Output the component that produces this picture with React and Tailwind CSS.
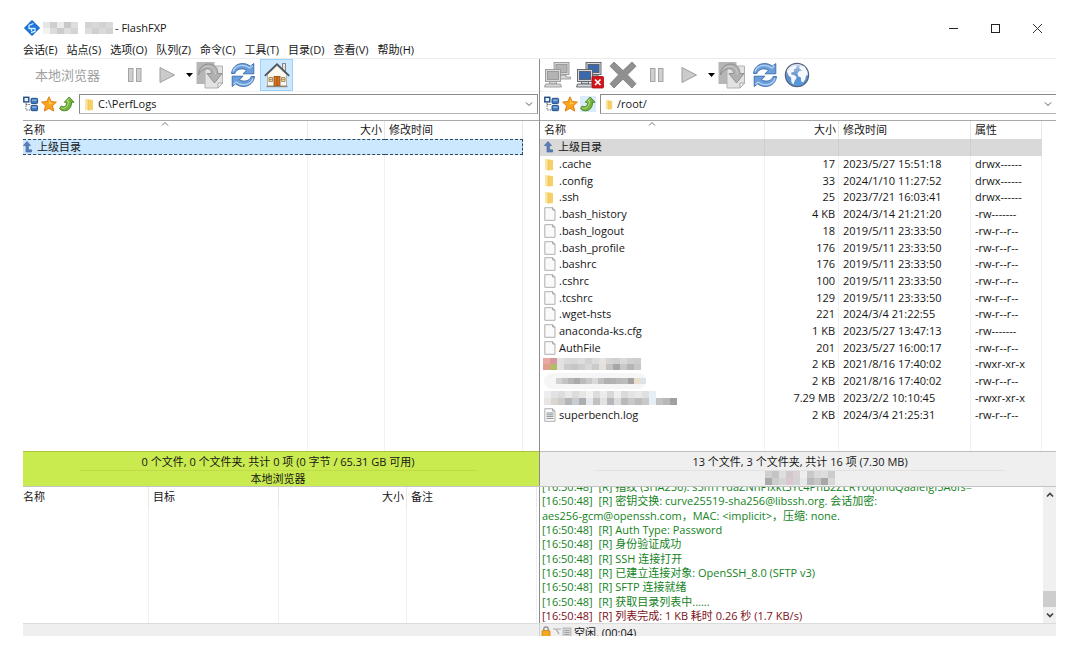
import React from "react";

const MENUS = ["会话(E)", "站点(S)", "选项(O)", "队列(Z)", "命令(C)", "工具(T)", "目录(D)", "查看(V)", "帮助(H)"];

const FILES = [
  { kind: "folder", name: ".cache", size: "17", time: "2023/5/27 15:51:18", attr: "drwx------" },
  { kind: "folder", name: ".config", size: "33", time: "2024/1/10 11:27:52", attr: "drwx------" },
  { kind: "folder", name: ".ssh", size: "25", time: "2023/7/21 16:03:41", attr: "drwx------" },
  { kind: "file", name: ".bash_history", size: "4 KB", time: "2024/3/14 21:21:20", attr: "-rw-------" },
  { kind: "file", name: ".bash_logout", size: "18", time: "2019/5/11 23:33:50", attr: "-rw-r--r--" },
  { kind: "file", name: ".bash_profile", size: "176", time: "2019/5/11 23:33:50", attr: "-rw-r--r--" },
  { kind: "file", name: ".bashrc", size: "176", time: "2019/5/11 23:33:50", attr: "-rw-r--r--" },
  { kind: "file", name: ".cshrc", size: "100", time: "2019/5/11 23:33:50", attr: "-rw-r--r--" },
  { kind: "file", name: ".tcshrc", size: "129", time: "2019/5/11 23:33:50", attr: "-rw-r--r--" },
  { kind: "file", name: ".wget-hsts", size: "221", time: "2024/3/4 21:22:55", attr: "-rw-r--r--" },
  { kind: "file", name: "anaconda-ks.cfg", size: "1 KB", time: "2023/5/27 13:47:13", attr: "-rw-------" },
  { kind: "file", name: "AuthFile", size: "201", time: "2023/5/27 16:00:17", attr: "-rw-r--r--" },
  { kind: "hiddenA", name: "", size: "2 KB", time: "2021/8/16 17:40:02", attr: "-rwxr-xr-x" },
  { kind: "hiddenB", name: "", size: "2 KB", time: "2021/8/16 17:40:02", attr: "-rw-r--r--" },
  { kind: "hiddenC", name: "", size: "7.29 MB", time: "2023/2/2 10:10:45", attr: "-rwxr-xr-x" },
  { kind: "log", name: "superbench.log", size: "2 KB", time: "2024/3/4 21:25:31", attr: "-rw-r--r--" },
];

const LOG = [
  "[16:50:48]  [R] 指纹 (SHA256): s5mTYdaZNhPIxkt3Yc4PnB2ZERYoqohdQaaIeIgI5A6fs=",
  "[16:50:48]  [R] 密钥交换: curve25519-sha256@libssh.org. 会话加密:",
  "aes256-gcm@openssh.com，MAC: <implicit>，压缩: none.",
  "[16:50:48]  [R] Auth Type: Password",
  "[16:50:48]  [R] 身份验证成功",
  "[16:50:48]  [R] SSH 连接打开",
  "[16:50:48]  [R] 已建立连接对象: OpenSSH_8.0 (SFTP v3)",
  "[16:50:48]  [R] SFTP 连接就绪",
  "[16:50:48]  [R] 获取目录列表中......",
];

/* ---------- pixelated privacy blocks ---------- */

function Mosaic({ rows, size, h = size, className = "" }) {
  const cols = Math.max(...rows.map((r) => r.length));
  return (
    <svg width={cols * size} height={rows.length * h} shapeRendering="crispEdges" className={"shrink-0 " + className} aria-hidden="true">
      {rows.map((r, y) =>
        r.map((c, x) => (c ? <rect key={x + "-" + y} x={x * size} y={y * h} width={size} height={h} fill={c} /> : null))
      )}
    </svg>
  );
}

const TITLE_MOSAIC = [
  ["#e6e6e6", "#cfcfcf", "#ececec", "#c9c9c9", "#dedede", null, "#d3d3d3", "#d8d8d8", "#d2d2d2", "#d9d9d9"],
  ["#f2f2f2", "#dcdcdc", "#cccccc", "#dedede", "#d4d4d4", null, "#dcdcdc", "#cfcfcf", "#dadada", "#d2d2d2"],
];
const STATUS_MOSAIC = [
  ["#cfcfcf", "#c4c4c4", "#dedede", "#d2c9cd", "#d9d2d5", "#eeeeee", "#c9c9c9", "#dadada", "#dddddd", "#cccccc"],
  ["#a9a9a9", "#cccccc", "#d5d5d5", "#d9c8d0", "#d2d2d2", "#e8e8e8", "#b9b9b9", "#c5c5c5", "#a8a8a8", "#d8d8d8"],
];
const ROW_A = [
  ["#e8a9a4", "#d8989a", "#e2e2e2", "#dadada", "#d8d8d8", "#dddddd", "#d2d2d2", "#dcdcdc", "#e6e2e0", "#d5d5d5", "#d0d0d0", "#dadada", "#d0d0d0", "#cdcdcd"],
  ["#e0a08c", "#b4ba68", "#e2e2e2", "#cbcbcb", "#c6c6c6", "#cecece", "#d8d8d8", "#cbcbcb", "#e6e0da", "#c3c3c3", "#a6a6a6", "#c8c8c8", "#b5b5b5", "#c7c7c7"],
];
const ROW_B = [
  ["#d2d2d2", "#c4c4c4", "#b6b6b6", "#aaaaaa", "#bcbcbc", "#c9c9c9", "#dadada", "#c0c0c0", "#b0b0b0", "#b2b2b2", "#b9b9b9", "#bcbcbc", "#a2a2a2", "#e8dfce", "#dfe3e8"],
];
const ROW_C = [
  ["#ededed", "#e2e2e2", "#dcdcdc", "#e9e9e9", "#dcdcdc", "#e6e6e6", "#f1f1f1", "#dddddd", "#ececec", "#d8d8d8", "#eeeeee", "#dadada", "#e4e4e4", "#e9e9e9", "#e0e0e0", "#e8eef5", null, null, null],
  ["#e6e6e6", "#dad6cf", "#cccccc", "#b5b5b5", "#c5ccd2", "#adadad", "#e4e8ed", "#c0c0c0", "#e2e2e2", "#b4b8bc", "#dcdcdc", "#b9b9b9", "#c8c8c8", "#bdbdbd", "#c9c9c9", "#e8eef5", "#c2c2c2", "#b8b8b8", "#a0a0a0"],
];

/* ---------- small icons ---------- */

function FolderIcon({ small }) {
  return (
    <svg width={small ? 8 : 10} height={small ? 11 : 13} viewBox="0 0 10 13" className="shrink-0" aria-hidden="true">
      <path d="M1 1h5l1 1v10H1z" fill="#fbe6a6" />
      <path d="M4 2h5v10l-5 .6z" fill="#f6cf66" />
      <path d="M4 2v10.6" stroke="#e9bc4e" strokeWidth=".6" />
    </svg>
  );
}

function FileIcon({ lines }) {
  return (
    <svg width="12" height="14" viewBox="0 0 12 14" className="shrink-0" aria-hidden="true">
      <path d="M.8.7h7.900l2.300 2.300v10.300H.8z" fill="#fafafa" stroke="#a6a6a6" strokeWidth=".9" />
      <path d="M8.700.7v2.300H11" fill="#ececec" stroke="#8a8a8a" strokeWidth=".8" />
      {lines && <path d="M2.500 5h7M2.500 6.800h7M2.500 8.400h7M2.500 10.400h7" stroke="#8c8f92" strokeWidth="1" />}
    </svg>
  );
}

function UpLevelIcon() {
  return (
    <svg width="10" height="12" viewBox="0 0 10 12" className="shrink-0" aria-hidden="true">
      <path d="M4 .5 7.600 4.600H5.400v4.200h3.200v2.200H3V4.600H.4z" fill="#5b7fb8" stroke="#3c5f9b" strokeWidth=".6" />
    </svg>
  );
}

function TreeIcon() {
  return (
    <svg width="16" height="16" viewBox="0 0 16 16" aria-hidden="true">
      <path d="M3 7v7h5M3 8.500h5" stroke="#5c6670" fill="none" strokeDasharray="1.400 1" />
      <rect x=".8" y="1.300" width="5" height="4.600" fill="#e6effa" stroke="#1f4b85" strokeWidth="1.400" />
      <rect x="8" y="2.300" width="6.600" height="5.300" rx="1" fill="#3f79bf" stroke="#234f88" />
      <rect x="8" y="9.400" width="6.600" height="5.300" rx="1" fill="#3f79bf" stroke="#234f88" />
      <path d="M9 4.200h4.500M9 11.200h4.500" stroke="#a9cdf0" />
    </svg>
  );
}

function StarIcon() {
  return (
    <svg width="16" height="16" viewBox="0 0 16 16" aria-hidden="true">
      <path d="m8 .8 2.200 4.700 5.200.6-3.900 3.600 1.200 5.400L8 12.300l-4.700 2.800 1.200-5.400L.6 6.100l5.200-.6z" fill="#fba31a" stroke="#d9780c" strokeWidth=".9" strokeLinejoin="round" />
      <path d="m8 3 1.400 3.500 3.200.4L8 8.500z" fill="#ffcd52" />
    </svg>
  );
}

function GreenUpIcon() {
  return (
    <svg width="16" height="16" viewBox="0 0 16 16" aria-hidden="true">
      <path d="M10.200 1 15 6.300h-2.400c0 5.200-2.900 8.500-7.100 8.500-2.200 0-3.900-.9-4.900-2.300l1.600-2.500c2.300 1.700 5.300.8 5.600-3.700H5.300z" fill="#76b33a" stroke="#47801f" strokeWidth=".9" strokeLinejoin="round" />
      <path d="M10.200 2.600 7.800 5.300h1.700c-.2 3.800-1.700 6.200-4.500 7-1 .2-2-.1-2.700-.5" fill="none" stroke="#b9df86" strokeWidth="1" />
    </svg>
  );
}

function Chevron({ up, weight = 1, className = "" }) {
  return (
    <svg width="8" height="6" viewBox="0 0 8 6" className={className} aria-hidden="true">
      <path d={up ? "M1 4.500 4 1.500l3 3" : "m1 1.500 3 3 3-3"} fill="none" stroke="currentColor" strokeWidth={weight} />
    </svg>
  );
}

/* ---------- toolbar icons ---------- */

const PauseIcon = () => (
  <svg width="16" height="16" viewBox="0 0 16 16" aria-hidden="true">
    <rect x="1.500" y="1.500" width="4.500" height="13" fill="#cfcfcf" stroke="#a4a4a4" />
    <rect x="9.500" y="1.500" width="4.500" height="13" fill="#cfcfcf" stroke="#a4a4a4" />
  </svg>
);

const PlayIcon = () => (
  <svg width="16" height="18" viewBox="0 0 16 18" aria-hidden="true">
    <path d="M1 1.500v15L15.500 9z" fill="#cbcbcb" stroke="#9e9e9e" strokeLinejoin="round" />
  </svg>
);

const CaretIcon = () => (
  <svg width="7" height="4" viewBox="0 0 7 4" aria-hidden="true">
    <path d="M0 0h7L3.500 4z" fill="#000" />
  </svg>
);

const TransferIcon = () => (
  <svg width="28" height="28" viewBox="0 0 28 28" aria-hidden="true">
    <path d="M.5 1h18v22H.5z" fill="#b6b6b6" />
    <path d="M9 5h17.500v17L22 27H9z" fill="#e2e2e2" stroke="#b2b2b2" />
    <path d="M22 27v-5h4.500z" fill="#fafafa" stroke="#a8a8a8" />
    <path d="M2.500 14C2.500 7 7.500 2.800 13 3c5.500.2 8.900 4 8.900 9.500H26L18.500 22 11 12.500h4.500c0-3-1.500-4.700-4.200-4.700-3.300 0-6.800 2.200-8.800 6.200z" fill="#b0b0b0" stroke="#8b8b8b" strokeWidth=".9" strokeLinejoin="round" />
    <path d="M5 8.700C9 3.500 19 3.500 19.500 13.500" fill="none" stroke="#cfcfcf" />
  </svg>
);

const RefreshIcon = () => (
  <svg width="26" height="26" viewBox="0 0 26 26" aria-hidden="true">
    <g fill="#6a9fdb" stroke="#3a6aa8" strokeWidth=".9" strokeLinejoin="round">
      <path d="M1.500 11.500C2 5.500 7 1.500 12.500 1.500c3 0 5.600.9 7.800 2.700L23.800 1.500v10.300H13l3.500-3.500C12.500 5.500 6 7 4.800 11.500z" />
      <path d="M24.500 14.500c-.5 6-5.500 10-11 10-3 0-5.600-.9-7.800-2.700l-3.500 2.700V14.200H13l-3.500 3.500c4 2.800 10.500 1.300 11.700-3.200z" />
    </g>
    <path d="M3 9.500C5 3.500 13.500 1 19.800 6l2.700-2.200M23 16.500c-2 6-10.500 8.500-16.800 3.500l-2.700 2.200" fill="none" stroke="#b4d3f3" strokeWidth="1.300" />
  </svg>
);

const HomeIcon = () => (
  <svg width="28" height="28" viewBox="0 0 28 28" aria-hidden="true">
    <path d="M19.500 2.500h3v8h-3z" fill="#e9e4dc" stroke="#6b6b6b" strokeWidth=".8" />
    <path d="M4.500 13.500 14 4.500l9.500 9V25h-19z" fill="#fbf8ee" stroke="#a79d8a" strokeWidth=".8" />
    <path d="M1.800 14.800 14 3.200l12.200 11.600" fill="none" stroke="#4d545c" strokeWidth="1.800" />
    <rect x="11" y="15.500" width="6" height="9.500" fill="#d9701c" stroke="#8d4a18" strokeWidth=".8" />
    <path d="M14 16v9" stroke="#8d4a18" strokeWidth=".7" />
    <path d="M6 16.500h3.500v4H6zM18.500 16.500H22v4h-3.500z" fill="#f3d68c" stroke="#8d7b58" strokeWidth=".8" />
    <path d="M6 18.500h3.500M18.500 18.500H22" stroke="#8d7b58" strokeWidth=".6" />
    <path d="M3.500 25.500h21" stroke="#8a8578" strokeWidth="1.400" />
  </svg>
);

function ComputersIcon({ active }) {
  const screen = active ? "#3c69ac" : "#b3b3b3";
  const shell = active ? "#d6d8dc" : "#d8d8d8";
  const edge = active ? "#5a5e66" : "#979797";
  return (
    <svg width="28" height="28" viewBox="0 0 28 28" aria-hidden="true">
      <g stroke={edge} strokeWidth=".9">
        <rect x="10" y="1.500" width="15" height="12" fill={shell} />
        <rect x="12" y="3.500" width="11" height="8" fill={screen} />
        <path d="M14 14h8v2h4.500v2H14z" fill={shell} />
        <rect x="1.500" y="8.500" width="15" height="12" fill={shell} />
        <rect x="3.500" y="10.500" width="11" height="8" fill={screen} />
        <path d="M5.500 20.500h7v2.500h-7z" fill={shell} />
        <path d="M1.500 23h15l1 3H.5z" fill={shell} />
      </g>
      {active && (
        <g>
          <rect x="16" y="15.500" width="11.500" height="11.500" rx="1" fill="#d4141b" stroke="#a30d12" strokeWidth=".8" />
          <path d="m19 18.500 5.500 5.500M24.500 18.500 19 24" stroke="#fff" strokeWidth="1.700" />
        </g>
      )}
    </svg>
  );
}

const AbortIcon = () => (
  <svg width="28" height="28" viewBox="0 0 28 28" aria-hidden="true">
    <path d="m5 1 9 8.600L23 1l4 4.200-8.600 8.600L27 22.700 23 27l-9-8.800L5 27l-4-4.300 8.600-8.900L1 5.200z" fill="#909090" stroke="#7c7c7c" strokeWidth=".8" strokeLinejoin="round" />
  </svg>
);

const GlobeIcon = () => (
  <svg width="26" height="26" viewBox="0 0 26 26" aria-hidden="true">
    <defs>
      <linearGradient id="sea" x1="0" y1="0" x2="0" y2="1">
        <stop offset="0" stopColor="#b9cbe6" />
        <stop offset=".55" stopColor="#5f8fd0" />
        <stop offset="1" stopColor="#4f9be0" />
      </linearGradient>
    </defs>
    <circle cx="13" cy="13" r="11.600" fill="url(#sea)" stroke="#56627f" strokeWidth="1.300" />
    <path d="M2.800 9C4.500 5.500 7 3.500 10 2.800l3 1.200-1.200 2.600-2.300.7.800 2.200-3.300 1.300.4 1.700 3.400.8 2 2.300-2.200 3.300-1.200 3.600-2-2.500-.3-4.200-2.500-2.400z" fill="#f6f8fb" />
    <path d="m14.800 5.200 2.500-1.800 3.400 1.200 2.600 4.600.6 4-1.800.4-.8 3.600-2.200 3.300-1.800-1-.5-4-2.700-1.200-.7-3 2-2.300 2.500-.3-1.300-1.300z" fill="#f6f8fb" />
    <path d="M3.200 9C6 3.500 12.500 1.500 18 4" fill="none" stroke="#dbe7f6" strokeWidth="1.200" />
  </svg>
);

function ToolButton({ label, className = "", children }) {
  return (
    <button type="button" aria-label={label} className={"flex h-8 shrink-0 items-center justify-center " + className}>
      {children}
    </button>
  );
}

/* ---------- panes ---------- */

function AddressBar({ id, path, remote }) {
  return (
    <div className={"flex h-6 items-center " + (remote ? "pl-1" : "pr-px")}>
      <div className="flex shrink-0 items-center gap-0.5">
        <button type="button" aria-label="目录树"><TreeIcon /></button>
        <button type="button" aria-label="收藏"><StarIcon /></button>
        <button type="button" aria-label="上级" className={remote ? "bg-[#d8ecfb]" : ""}><GreenUpIcon /></button>
      </div>
      <div className={"relative ml-1 flex h-5 min-w-0 flex-1 items-center border-y border-l border-[#8a8a8a] border-b-[#b5b5b5] bg-white pl-1 " + (remote ? "" : "border-r")}>
        <FolderIcon small={remote} />
        <label htmlFor={id} className="sr-only">路径</label>
        <select id={id} className="min-w-0 flex-1 appearance-none bg-transparent pl-1 leading-[18px] outline-none">
          <option>{path}</option>
        </select>
        <Chevron className="pointer-events-none absolute right-1 top-1.5 text-[#555]" />
      </div>
    </div>
  );
}

function ColumnTail({ widths }) {
  return (
    <div className="flex min-h-0 flex-1" aria-hidden="true">
      {widths.map((w, i) => (
        <div key={i} className={"border-r border-[#f0f0f0] " + w} />
      ))}
    </div>
  );
}

const TH = "relative border-r border-[#e8e8e8] p-0 font-normal leading-4";
const TD = "border-r border-[#f0f0f0] p-0 leading-4";

function NameCell({ f }) {
  if (f.kind === "hiddenA") return <Mosaic rows={ROW_A} size={7} h={6} className="-ml-px" />;
  if (f.kind === "hiddenB")
    return (
      <div className="flex h-4 items-center rounded-full bg-[#f6f6f6] pl-3">
        <Mosaic rows={ROW_B} size={6} />
      </div>
    );
  if (f.kind === "hiddenC") return <Mosaic rows={ROW_C} size={7} />;
  return (
    <>
      <span className="flex w-3 shrink-0">
        {f.kind === "folder" ? <FolderIcon /> : <FileIcon lines={f.kind === "log"} />}
      </span>
      <span className="ml-[3px]">{f.name}</span>
    </>
  );
}

function LocalPane() {
  return (
    <section className="flex min-w-0 flex-col">
      <div className="flex h-8 items-center">
        <span className="ml-3 w-[86px] shrink-0 text-[13px] text-[#a0a0a0]">本地浏览器</span>
        <ToolButton label="暂停" className="ml-1.5 w-4"><PauseIcon /></ToolButton>
        <ToolButton label="开始" className="ml-4 w-4"><PlayIcon /></ToolButton>
        <ToolButton label="开始选项" className="ml-2.5 w-2"><CaretIcon /></ToolButton>
        <ToolButton label="传输" className="ml-[3px] w-7"><TransferIcon /></ToolButton>
        <ToolButton label="刷新" className="ml-1.5 w-[26px]"><RefreshIcon /></ToolButton>
        <ToolButton label="本地" className="ml-1 w-[33px] border border-[#99d1ff] bg-[#cce8ff]"><HomeIcon /></ToolButton>
      </div>
      <div className="border-t border-[#f2f2f2]" />
      <AddressBar id="local-path" path="C:\PerfLogs" />
      <div className="mt-1 border-t border-[#a9a9a9]" />
      <table className="w-full table-fixed border-separate border-spacing-0">
        <colgroup>
          <col />
          <col className="w-[77px]" />
          <col className="w-[138px]" />
          <col className="w-[16px]" />
        </colgroup>
        <thead>
          <tr className="h-[18px]">
            <th className={TH + " text-left"}>名称<Chevron up className="absolute left-1/2 top-0 -translate-x-1/2 text-[#777]" /></th>
            <th className={TH + " pr-0.5 text-right"}>大小</th>
            <th className={TH + " pl-1 text-left"}>修改时间</th>
            <td />
          </tr>
        </thead>
        <tbody>
          <tr className="h-4 bg-[#cce8ff]">
            <td className="border-y border-dashed border-[#2c4a63] p-0 leading-[14px]">
              <div className="flex items-center gap-1"><UpLevelIcon />上级目录</div>
            </td>
            <td className="border-y border-dashed border-[#2c4a63] p-0" />
            <td className="border-y border-r border-dashed border-[#2c4a63] p-0" />
            <td className="bg-white p-0" />
          </tr>
        </tbody>
      </table>
      <ColumnTail widths={["flex-1", "w-[77px]", "w-[138px]", "w-[16px] border-transparent"]} />
    </section>
  );
}

function RemotePane() {
  return (
    <section className="flex min-w-0 flex-col">
      <div className="flex h-8 items-center">
        <ToolButton label="连接" className="ml-1 w-7"><ComputersIcon /></ToolButton>
        <ToolButton label="断开" className="ml-1 w-7"><ComputersIcon active /></ToolButton>
        <ToolButton label="中止" className="ml-[5px] w-7"><AbortIcon /></ToolButton>
        <ToolButton label="暂停" className="ml-3 w-4"><PauseIcon /></ToolButton>
        <ToolButton label="开始" className="ml-4 w-4"><PlayIcon /></ToolButton>
        <ToolButton label="开始选项" className="ml-2.5 w-2"><CaretIcon /></ToolButton>
        <ToolButton label="传输" className="ml-[3px] w-7"><TransferIcon /></ToolButton>
        <ToolButton label="刷新" className="ml-1.5 w-[26px]"><RefreshIcon /></ToolButton>
        <ToolButton label="远程" className="ml-1.5 w-[26px]"><GlobeIcon /></ToolButton>
      </div>
      <div className="border-t border-[#f2f2f2]" />
      <AddressBar id="remote-path" path="/root/" remote />
      <div className="mt-1 border-t border-[#a9a9a9]" />
      <table className="h-[302px] w-full table-fixed border-separate border-spacing-0">
        <colgroup>
          <col />
          <col className="w-[74px]" />
          <col className="w-[132px]" />
          <col className="w-[71px]" />
          <col className="w-[14px]" />
        </colgroup>
        <thead>
          <tr className="h-[18px]">
            <th className={TH + " pl-1 text-left"}>名称<Chevron up className="absolute left-1/2 top-0 -translate-x-1/2 text-[#777]" /></th>
            <th className={TH + " pr-0.5 text-right"}>大小</th>
            <th className={TH + " pl-1 text-left"}>修改时间</th>
            <th className={TH + " pl-1 text-left"}>属性</th>
            <td />
          </tr>
        </thead>
        <tbody>
          <tr className="bg-[#d9d9d9]">
            <td className="border-r border-[#cfcfcf] p-0 leading-4">
              <div className="flex items-center gap-1 pl-1"><UpLevelIcon />上级目录</div>
            </td>
            <td className="border-r border-[#cfcfcf] p-0" />
            <td className="border-r border-[#cfcfcf] p-0" />
            <td className="p-0" />
            <td className="bg-white p-0" />
          </tr>
          {FILES.map((f, i) => (
            <tr key={i}>
              <td className={TD}>
                <div className="flex h-4 items-center pl-1"><NameCell f={f} /></div>
              </td>
              <td className={TD + " pr-[3px] text-right"}>{f.size}</td>
              <td className={TD + " pl-1"}>{f.time}</td>
              <td className={TD + " pl-1"}>{f.attr}</td>
              <td />
            </tr>
          ))}
        </tbody>
      </table>
      <ColumnTail widths={["flex-1", "w-[74px]", "w-[132px]", "w-[71px]", "w-[14px] border-transparent"]} />
    </section>
  );
}

function QueuePane() {
  return (
    <section className="flex min-w-0 flex-col pr-0.5">
      <table className="w-full table-fixed border-separate border-spacing-0">
        <colgroup>
          <col className="w-[126px]" />
          <col className="w-[130px]" />
          <col className="w-[128px]" />
          <col />
        </colgroup>
        <thead>
          <tr className="h-5">
            <th className={TH + " text-left"}>名称</th>
            <th className={TH + " pl-1 text-left"}>目标</th>
            <th className={TH + " pr-0.5 text-right"}>大小</th>
            <th className={TH + " pl-1 text-left"}>备注</th>
          </tr>
        </thead>
      </table>
      <ColumnTail widths={["w-[126px]", "w-[130px]", "w-[128px]", "flex-1"]} />
    </section>
  );
}

function LogPane() {
  return (
    <section className="flex min-w-0">
      <div className="flex h-[136px] min-w-0 flex-1 flex-col justify-end overflow-hidden pl-0.5">
        <ol className="flex h-[143px] shrink-0 flex-col justify-between whitespace-pre leading-[14px] text-[#14831c]">
          {LOG.map((l) => <li key={l}>{l}</li>)}
          <li className="text-[#7d1016]">{"[16:50:48]  [R] 列表完成: 1 KB 耗时 0.26 秒 (1.7 KB/s)"}</li>
        </ol>
      </div>
      <div className="flex w-[13px] shrink-0 flex-col items-center bg-[#f0f0f0] text-[#404040]">
        <button type="button" aria-label="向上滚动" className="flex h-4 items-center"><Chevron up weight={1.7} /></button>
        <div className="flex-1" />
        <div className="h-4 w-full bg-[#cdcdcd]" />
        <button type="button" aria-label="向下滚动" className="flex h-4 items-center"><Chevron weight={1.7} /></button>
      </div>
    </section>
  );
}

export default function App() {
  return (
    <div className="bg-white pb-[22px] pl-[23px] pr-[29px] pt-4 font-['Open_Sans','Noto_Sans_CJK_SC',sans-serif] text-[11px] leading-4 text-[#161616]">
      <header className="flex h-6 items-center">
        <svg width="18" height="18" viewBox="0 0 18 18" className="shrink-0" aria-hidden="true">
          <path d="M9 1.500 16.500 9 9 16.500 1.500 9z" fill="#1677e0" stroke="#0f59b8" strokeLinejoin="round" />
          <path d="M10.500 4.500 6 6.500v3h6v3L8 13.500M8.500 9.500v2.500" fill="none" stroke="#d5ecff" strokeWidth="1.300" />
        </svg>
        <Mosaic rows={TITLE_MOSAIC} size={7} h={6} className="ml-0.5" />
        <h1 className="ml-0.5 flex-1">- FlashFXP</h1>
        <div className="flex items-center gap-[31px] pr-[13px]">
          <button type="button" aria-label="最小化"><svg width="11" height="11" viewBox="0 0 11 11"><path d="M1 5.500h9" stroke="#222" /></svg></button>
          <button type="button" aria-label="最大化"><svg width="11" height="11" viewBox="0 0 11 11"><rect x="1.500" y="1.500" width="8" height="8" fill="none" stroke="#222" /></svg></button>
          <button type="button" aria-label="关闭"><svg width="11" height="11" viewBox="0 0 11 11"><path d="m1 1 9 9M10 1l-9 9" stroke="#333" /></svg></button>
        </div>
      </header>
      <nav className="flex h-[19px] items-end gap-[9px] border-b border-[#ececec]">
        {MENUS.map((m) => <button key={m} type="button" className="shrink-0">{m}</button>)}
      </nav>

      <main>
        <div className="grid h-[392px] grid-cols-[minmax(0,1fr)_1px_minmax(0,1fr)]">
          <LocalPane />
          <div className="bg-[#8c8c8c]" />
          <RemotePane />
        </div>

        <div className="grid grid-cols-[minmax(0,1fr)_1px_minmax(0,1fr)] border-b border-[#c4c4c4] text-center">
          <div className="flex h-[35px] flex-col border-t border-[#a9c443] bg-[#caeb50] pr-1.5">
            <p className="mx-14 border-b border-[#bcdc48] pt-0.5">0 个文件, 0 个文件夹, 共计 0 项 (0 字节 / 65.31 GB 可用)</p>
            <p>本地浏览器</p>
          </div>
          <div className="bg-[#8c8c8c]" />
          <div className="flex h-[35px] flex-col items-center border-t border-[#bdbdbd] bg-[#efefef] pl-1">
            <p className="w-4/5 border-b border-[#e2e2e2] pt-0.5">13 个文件, 3 个文件夹, 共计 16 项 (7.30 MB)</p>
            <Mosaic rows={STATUS_MOSAIC} size={7} />
          </div>
        </div>

        <div className="grid h-[136px] grid-cols-[minmax(0,1fr)_1px_minmax(0,1fr)]">
          <QueuePane />
          <div className="bg-[#8c8c8c]" />
          <LogPane />
        </div>
      </main>

      <footer className="grid h-[13px] grid-cols-[minmax(0,1fr)_1px_minmax(0,1fr)] overflow-hidden border-t border-[#dcdcdc] bg-[#efefef]">
        <div />
        <div className="bg-[#cfcfcf]" />
        <div className="flex items-start gap-px pl-px pt-px">
          <svg width="32" height="12" viewBox="0 0 32 12" className="shrink-0" aria-hidden="true">
            <path d="M2.800 6V4a2.200 2.200 0 0 1 4.400 0v2" fill="none" stroke="#8c8c8c" strokeWidth="1.300" />
            <rect x="1" y="5.500" width="8" height="6.500" rx=".8" fill="#f5a81f" stroke="#c47a0e" strokeWidth=".7" />
            <path d="M12 4h3l3 5M16 4h4" fill="none" stroke="#a5a5a5" strokeWidth="1.200" />
            <rect x="22" y="3" width="8" height="8.500" fill="#d4d4d4" stroke="#adadad" strokeWidth=".8" />
            <path d="M23.500 5.500h5M23.500 7.500h5M23.500 9.500h5" stroke="#969696" strokeWidth=".8" />
          </svg>
          <span>空闲. (00:04)</span>
        </div>
      </footer>
    </div>
  );
}
